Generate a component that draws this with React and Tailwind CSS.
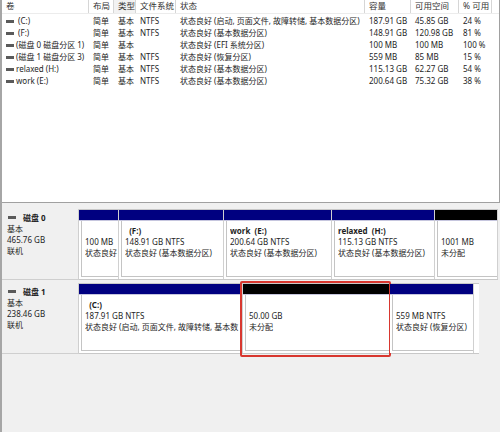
import React from 'react';

const cols = [
  { label: '卷', w: 'w-[87px]' },
  { label: '布局', w: 'w-[25px]' },
  { label: '类型', w: 'w-[22px]', active: true },
  { label: '文件系统', w: 'w-[40px]' },
  { label: '状态', w: 'w-[189px]' },
  { label: '容量', w: 'w-[46px]' },
  { label: '可用空间', w: 'w-[48px]' },
  { label: '% 可用', w: 'w-[33px]' },
];

const volumes = [
  [' (C:)', '简单', '基本', 'NTFS', '状态良好 (启动, 页面文件, 故障转储, 基本数据分区)', '187.91 GB', '45.85 GB', '24 %'],
  [' (F:)', '简单', '基本', 'NTFS', '状态良好 (基本数据分区)', '148.91 GB', '120.98 GB', '81 %'],
  ['(磁盘 0 磁盘分区 1)', '简单', '基本', '', '状态良好 (EFI 系统分区)', '100 MB', '100 MB', '100 %'],
  ['(磁盘 1 磁盘分区 3)', '简单', '基本', 'NTFS', '状态良好 (恢复分区)', '559 MB', '85 MB', '15 %'],
  ['relaxed (H:)', '简单', '基本', 'NTFS', '状态良好 (基本数据分区)', '115.13 GB', '62.27 GB', '54 %'],
  ['work (E:)', '简单', '基本', 'NTFS', '状态良好 (基本数据分区)', '200.64 GB', '75.32 GB', '38 %'],
];

const disks = [
  {
    name: '磁盘 0',
    info: ['基本', '465.76 GB', '联机'],
    box: 'w-[419px]',
    parts: [
      { w: 'w-[40px]', strip: 'bg-[#000080]', lines: ['', '100 MB', '状态良好'] },
      { w: 'w-[105px]', strip: 'bg-[#000080]', lines: ['  (F:)', '148.91 GB NTFS', '状态良好 (基本数据分区)'] },
      { w: 'w-[108px]', strip: 'bg-[#000080]', lines: ['work  (E:)', '200.64 GB NTFS', '状态良好 (基本数据分区)'] },
      { w: 'w-[103px]', strip: 'bg-[#000080]', lines: ['relaxed  (H:)', '115.13 GB NTFS', '状态良好 (基本数据分区)'] },
      { w: 'w-[63px]', strip: 'bg-black', lines: ['', '1001 MB', '未分配'] },
    ],
  },
  {
    name: '磁盘 1',
    info: ['基本', '238.46 GB', '联机'],
    box: 'w-[400px] pr-[3px]',
    parts: [
      { w: 'w-[164px]', strip: 'bg-[#000080]', lines: ['  (C:)', '187.91 GB NTFS', '状态良好 (启动, 页面文件, 故障转储, 基本数'] },
      { w: 'w-[147px]', strip: 'bg-black', lines: ['', '50.00 GB', '未分配'], marked: true },
      { w: 'w-[84px]', strip: 'bg-[#000080]', lines: ['', '559 MB NTFS', '状态良好 (恢复分区)'] },
    ],
  },
];

const DiskIcon = ({ className }) => (
  <span className={`inline-block h-[3px] w-[8px] bg-[#5a5a5a] ${className}`} />
);

const Partition = ({ part }) => (
  <div className={`relative flex shrink-0 flex-col border-r border-[#d0d0d0] ${part.w}`}>
    <div className={`h-[11px] border-b border-[#c6c6de] ${part.strip}`} />
    <div className="flex-1 bg-white pb-[2px] pl-[2px]">
      <div className="h-full overflow-hidden border-b border-l border-[#c4c4c4] pl-[3px] pt-[4px]">
        {part.lines.map((line, i) => (
          <div key={i} className={`h-[11px] overflow-hidden whitespace-pre leading-[11px] ${i === 0 ? 'font-bold' : ''}`}>
            {line}
          </div>
        ))}
      </div>
    </div>
    {part.marked && (
      <div className="absolute -bottom-[4px] -left-[3px] -right-[2px] -top-[3px] rounded-[2px] border-2 border-[#d8372f]" />
    )}
  </div>
);

export default function App() {
  return (
    <div className="flex h-[432px] w-[500px] flex-col overflow-hidden border-l-2 border-[#a6a6a6] bg-[#f0f0f0] font-['Noto_Sans','Noto_Sans_CJK_SC',sans-serif] text-[8px] text-[#1e1e1e]">
      {/* volume list */}
      <div className="h-[203px] shrink-0 border-b border-r border-[#a0a0a0] bg-white">
        <div className="flex h-[14px] border-b border-[#ececec]">
          {cols.map((c) => (
            <div
              key={c.label}
              className={`flex shrink-0 items-center border-r border-[#d6d6d6] pl-[4px] text-[8.5px] text-[#333] ${c.w} ${c.active ? 'bg-[#f2f2f2]' : ''}`}
            >
              {c.label}
            </div>
          ))}
        </div>
        <div className="pt-[1px]">
          {volumes.map((v, r) => (
            <div key={r} className="flex h-[12px] items-center leading-[12px]">
              {v.map((cell, i) => (
                <div key={i} className={`flex shrink-0 items-center overflow-hidden whitespace-pre pl-[4px] ${cols[i].w}`}>
                  {i === 0 && <DiskIcon className="mr-[2px] shrink-0" />}
                  {cell}
                </div>
              ))}
            </div>
          ))}
        </div>
      </div>

      {/* graphical view */}
      <div className="flex flex-col gap-[3px] pt-[6px]">
        {disks.map((d) => (
          <div key={d.name} className="flex h-[71px]">
            <div className="w-[77px] shrink-0 border-b border-r border-[#cfcfcf] pl-[5px] pt-[3px] leading-[11px]">
              <div className="flex h-[11px] items-center font-bold">
                <DiskIcon className="ml-[1px] mr-[7px]" />
                {d.name}
              </div>
              {d.info.map((t) => (
                <div key={t} className="h-[11px]">{t}</div>
              ))}
            </div>
            <div className={`flex shrink-0 border-b border-t border-[#c8c8c8] bg-white ${d.box}`}>
              {d.parts.map((p, i) => (
                <Partition key={i} part={p} />
              ))}
            </div>
          </div>
        ))}
      </div>
    </div>
  );
}
